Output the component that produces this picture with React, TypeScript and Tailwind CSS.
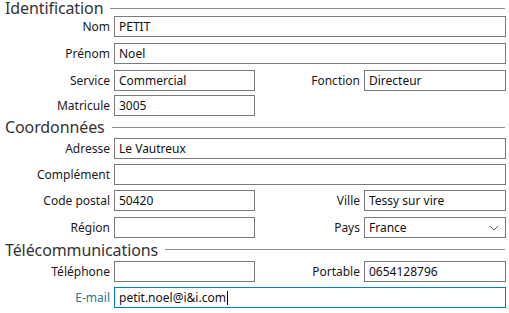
import React from 'react';

const font = "font-['Segoe_UI','Noto_Sans','Open_Sans',sans-serif]";

const SectionHeader = ({ title, className = '' }: { title: string; className?: string }) => (
  <div className={`flex items-center pl-[5px] pr-[4px] ${className}`}>
    <span className="text-[16px] leading-[16px] text-[#333] tracking-[-0.1px]">{title}</span>
    <div className="ml-[7px] h-px flex-1 bg-[#8c8c8c]" />
  </div>
);

const Label = ({ children, accent }: { children: React.ReactNode; accent?: boolean }) => (
  <span className={`text-right pr-[4px] leading-[21px] ${accent ? 'text-[#1f7896]' : 'text-[#1a1a1a]'}`}>
    {children}
  </span>
);

const Input = ({ value, focused }: { value?: string; focused?: boolean }) => (
  <div
    className={`h-[21px] border bg-white px-[4px] leading-[19px] text-[#111] truncate flex items-center ${
      focused ? 'border-[#0078d7]' : 'border-[#7a7a7a]'
    }`}
  >
    <span>{value}</span>
    {focused && <span className="ml-px h-[14px] w-px bg-black" />}
  </div>
);

const Select = ({ value }: { value: string }) => (
  <div className="h-[21px] border border-[#7a7a7a] bg-white pl-[4px] pr-[6px] flex items-center justify-between text-[#111]">
    <span>{value}</span>
    <svg width="10" height="6" viewBox="0 0 10 6">
      <path d="M1 1l4 4 4-4" fill="none" stroke="#555" strokeWidth="1" />
    </svg>
  </div>
);

const grid = 'grid grid-cols-[114px_141px_109px_142px]';

export default function App() {
  return (
    <div className={`w-[509px] h-[313px] bg-white text-[12px] ${font}`}>
      <SectionHeader title="Identification" className="h-[16px]" />
      <div className={grid}>
        <Label>Nom</Label>
        <div className="col-span-3"><Input value="PETIT" /></div>
      </div>
      <div className={`${grid} mt-[6px]`}>
        <Label>Prénom</Label>
        <div className="col-span-3"><Input value="Noel" /></div>
      </div>
      <div className={`${grid} mt-[6px]`}>
        <Label>Service</Label>
        <Input value="Commercial" />
        <Label>Fonction</Label>
        <Input value="Directeur" />
      </div>
      <div className={`${grid} mt-[4px]`}>
        <Label>Matricule</Label>
        <Input value="3005" />
      </div>

      <SectionHeader title="Coordonnées" className="h-[22px]" />
      <div className={grid}>
        <Label>Adresse</Label>
        <div className="col-span-3"><Input value="Le Vautreux" /></div>
      </div>
      <div className={`${grid} mt-[5px]`}>
        <Label>Complément</Label>
        <div className="col-span-3"><Input /></div>
      </div>
      <div className={`${grid} mt-[5px]`}>
        <Label>Code postal</Label>
        <Input value="50420" />
        <Label>Ville</Label>
        <Input value="Tessy sur vire" />
      </div>
      <div className={`${grid} mt-[6px]`}>
        <Label>Région</Label>
        <Input />
        <Label>Pays</Label>
        <Select value="France" />
      </div>

      <SectionHeader title="Télécommunications" className="h-[23px]" />
      <div className={grid}>
        <Label>Téléphone</Label>
        <Input />
        <Label>Portable</Label>
        <Input value="0654128796" />
      </div>
      <div className={`${grid} mt-[5px]`}>
        <Label accent>E-mail</Label>
        <div className="col-span-3"><Input value="petit.noel@i&i.com" focused /></div>
      </div>
    </div>
  );
}
